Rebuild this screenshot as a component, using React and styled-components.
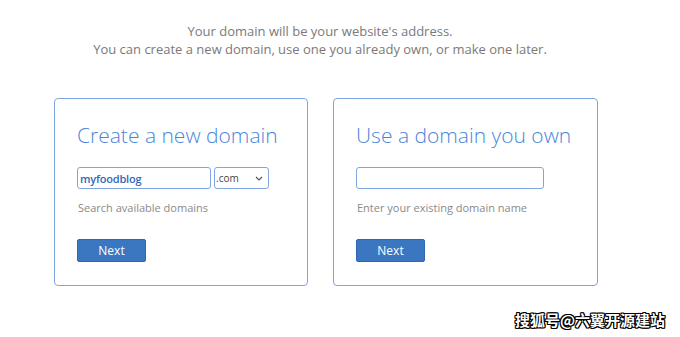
import React from 'react';
import styled, { createGlobalStyle } from 'styled-components';

const GlobalStyle = createGlobalStyle`
  html, body {
    margin: 0;
    padding: 0;
    background: #ffffff;
  }
  body {
    font-family: "Open Sans", "Noto Sans", sans-serif;
  }
`;

const Page = styled.main`
  position: relative;
  width: 680px;
  height: 337px;
  padding-top: 22px;
  box-sizing: border-box;
  overflow: hidden;
`;

const Intro = styled.div`
  width: 640px;
  text-align: center;
  font-size: 13px;
  line-height: 18px;
  color: #7a7a7a;
`;

const CardRow = styled.div`
  display: flex;
  gap: 25px;
  margin-top: 40px;
  padding-left: 54px;
`;

const Card = styled.section`
  display: flex;
  flex-direction: column;
  align-items: flex-start;
  width: ${({ $width }) => $width}px;
  height: 188px;
  padding: 21px 22px 0 22px;
  box-sizing: border-box;
  border: 1px solid #7ea7e2;
  border-radius: 4px;
`;

const CardTitle = styled.h2`
  margin: 0;
  font-weight: 300;
  font-size: 21px;
  line-height: 30px;
  color: #4a86da;
  white-space: nowrap;
`;

const FieldRow = styled.div`
  display: flex;
  gap: 3px;
  margin-top: 17px;
`;

const TextField = styled.div`
  display: flex;
  align-items: center;
  width: ${({ $width }) => $width}px;
  height: 22px;
  padding: 0 2px;
  box-sizing: border-box;
  border: 1px solid #7ea7e2;
  border-radius: 3px;
  font-size: 11px;
  font-weight: 600;
  letter-spacing: -0.2px;
  color: #3568b8;
`;

const Select = styled.div`
  display: flex;
  align-items: center;
  justify-content: space-between;
  width: 55px;
  height: 22px;
  padding: 0 5px 0 1px;
  box-sizing: border-box;
  border: 1px solid #7ea7e2;
  border-radius: 3px;
  font-size: 10px;
  color: #444;

  svg {
    display: block;
  }
`;

const Help = styled.p`
  margin: 11px 0 0 1px;
  font-size: 11px;
  line-height: 16px;
  color: #8a8a8a;
`;

const NextButton = styled.button`
  width: 69px;
  height: 23px;
  margin-top: 23px;
  padding: 0;
  border: 1px solid #2f68b0;
  border-radius: 2px;
  background: #3b77c1;
  color: #ffffff;
  font-family: "Open Sans", sans-serif;
  font-size: 12px;
  line-height: 21px;
  cursor: pointer;
`;

const Watermark = styled.div`
  position: absolute;
  right: 15px;
  bottom: 8px;
  font-family: "Noto Sans CJK SC", sans-serif;
  font-weight: 700;
  font-size: 15px;
  line-height: 19px;
  color: #ffffff;
  text-shadow:
    1px 0 0 #000, -1px 0 0 #000, 0 1px 0 #000, 0 -1px 0 #000,
    1px 1px 0 #000, -1px -1px 0 #000, 1px -1px 0 #000, -1px 1px 0 #000;
`;

function Chevron() {
  return (
    <svg width="8" height="5" viewBox="0 0 8 5">
      <path d="M1 1 L4 4 L7 1" fill="none" stroke="#555" strokeWidth="1.2" />
    </svg>
  );
}

export default function App() {
  return (
    <React.Fragment>
      <GlobalStyle />
      <Page>
        <Intro>
          Your domain will be your website's address.
          <br />
          You can create a new domain, use one you already own, or make one later.
        </Intro>
        <CardRow>
          <Card $width={254}>
            <CardTitle>Create a new domain</CardTitle>
            <FieldRow>
              <TextField $width={134}>myfoodblog</TextField>
              <Select>
                .com
                <Chevron />
              </Select>
            </FieldRow>
            <Help>Search available domains</Help>
            <NextButton>Next</NextButton>
          </Card>
          <Card $width={265}>
            <CardTitle>Use a domain you own</CardTitle>
            <FieldRow>
              <TextField $width={188} />
            </FieldRow>
            <Help>Enter your existing domain name</Help>
            <NextButton>Next</NextButton>
          </Card>
        </CardRow>
        <Watermark>搜狐号@六翼开源建站</Watermark>
      </Page>
    </React.Fragment>
  );
}
